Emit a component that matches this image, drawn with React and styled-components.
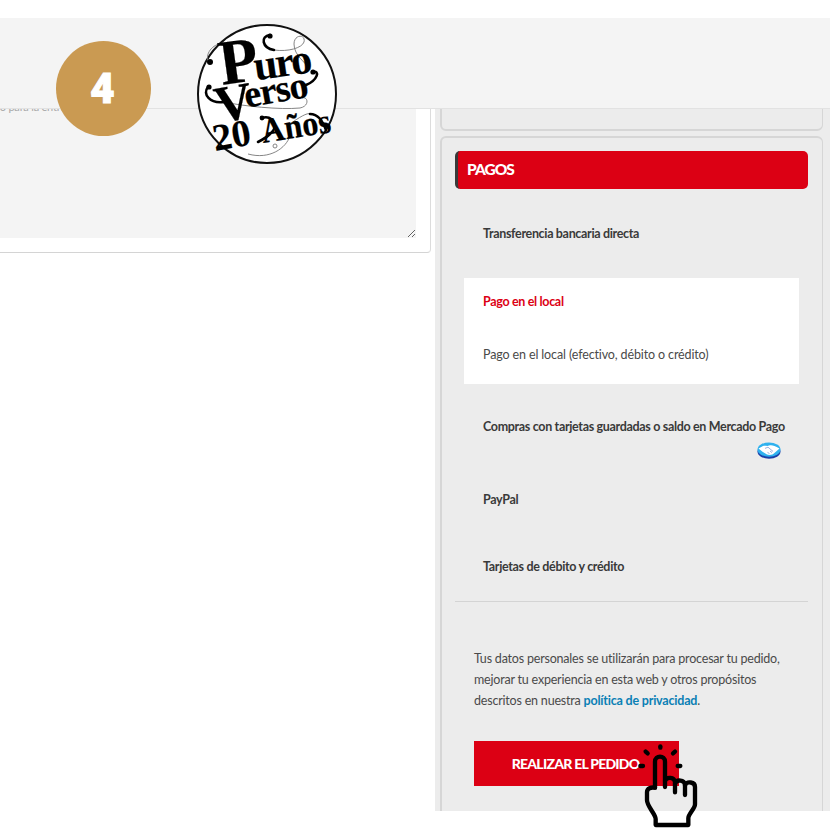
import React from 'react';
import styled, { createGlobalStyle } from 'styled-components';

const GlobalStyle = createGlobalStyle`
    html, body {
        margin: 0;
        padding: 0;
        background: #fff;
    }
    * {
        box-sizing: border-box;
    }
`

const Page = styled.div`
    position: relative;
    width: 830px;
    height: 830px;
    overflow: hidden;
    background: #fff;
    font-family: "Lato", "Liberation Sans", sans-serif;
    color: #3d3d3d;
`

const TopBar = styled.div`
    position: absolute;
    top: 0;
    left: 0;
    right: 0;
    z-index: 5;
    padding-top: 18px;
    background: #fff;
`

const HeaderBand = styled.header`
    display: flex;
    align-items: flex-start;
    gap: 46px;
    height: 91px;
    padding: 23px 0 0 56px;
    background: #f4f4f4;
    border-bottom: 1px solid #e2e2e2;
`

const StepCircle = styled.div`
    display: flex;
    align-items: center;
    justify-content: center;
    flex: none;
    width: 95px;
    height: 95px;
    border-radius: 50%;
    background: #ca9a52;
    color: #fff;
    font-family: "Roboto", sans-serif;
    font-weight: 900;
    font-size: 42px;
    padding-right: 2px;
    -webkit-text-stroke: 1px #fff;
`

const LogoMark = styled.svg`
    flex: none;
    width: 155px;
    height: 155px;
    margin: -23px 0 0 -7px;
`

const Columns = styled.main`
    display: grid;
    grid-template-columns: 431px 395px;
    column-gap: 4px;
    height: 811px;
    width: 830px;
`

const LeftColumn = styled.section`
    padding-top: 60px;
    overflow: hidden;
`

const NotesCard = styled.div`
    height: 193px;
    padding: 34px 14px 14px 0;
    background: #fff;
    border-right: 1px solid #dcdcdc;
    border-bottom: 1px solid #d4d4d4;
    border-bottom-right-radius: 4px;
`

const NotesArea = styled.textarea`
    display: block;
    width: calc(100% + 105px);
    height: 144px;
    margin-left: -105px;
    padding: 5px 8px;
    border: 0;
    border-radius: 0;
    outline: 0;
    background: #f4f4f4;
    font-family: "Lato", sans-serif;
    font-size: 11px;
    line-height: 16px;
    letter-spacing: -0.2px;

    &::placeholder {
        color: #a8a8a8;
        opacity: 1;
    }
`

const Sidebar = styled.aside`
    display: flex;
    flex-direction: column;
    gap: 6px;
    height: 811px;
    padding: 0 7px 0 5px;
    background: #ececec;
    overflow: hidden;
`

const Panel = styled.div`
    flex: none;
    border: 1px solid #d6d6d6;
    border-width: 2px 1px 2px 2px;
    border-radius: 6px;
`

const EmptyPanel = styled(Panel)`
    height: 131px;
`

const PaymentPanel = styled(Panel)`
    margin-top: -1px;
    padding: 13px 14px 60px 13px;
`

const SectionTitle = styled.h3`
    margin: 0;
    height: 38px;
    padding-left: 9px;
    background: #dc0014;
    border-left: 3px solid #3a3a3a;
    border-radius: 5px;
    color: #fff;
    font-size: 15.5px;
    font-weight: 900;
    line-height: 36px;
    letter-spacing: -1px;
`

const MethodList = styled.div`
    display: flex;
    flex-direction: column;
    padding: 0 9px;
`

const Method = styled.div`
    padding: ${props => props.$active ? '16px 19px 18px' : '0 19px'};
    background: ${props => props.$active ? '#fff' : 'transparent'};
    height: ${props => props.$height}px;
    margin-top: ${props => props.$top || 0}px;
`

const MethodName = styled.div`
    margin-top: ${props => props.$offset || 0}px;
    font-size: 12.5px;
    font-weight: 700;
    line-height: 16px;
    letter-spacing: -0.33px;
    white-space: nowrap;
    color: ${props => props.$active ? '#dc0014' : '#3a3a3a'};
`

const MethodNote = styled.p`
    margin: 37px 0 0;
    font-size: 12.5px;
    line-height: 16px;
    letter-spacing: -0.13px;
    color: #4a4a4a;
`

const MethodIcon = styled.div`
    display: flex;
    justify-content: flex-end;
    margin-right: -1px;
    margin-top: 7px;
`

const Divider = styled.hr`
    margin: 26px 0 0;
    border: 0;
    border-top: 1px solid #d4d4d4;
`

const Privacy = styled.p`
    margin: 46px 14px 0 19px;
    font-size: 12.5px;
    line-height: 21px;
    letter-spacing: -0.2px;
    color: #4a4a4a;

    a {
        color: #0a80b5;
        font-weight: 700;
        text-decoration: none;
    }
`

const OrderButton = styled.button`
    display: block;
    width: 205px;
    height: 45px;
    margin: 30px 0 0 19px;
    padding: 0 2px 0 0;
    border: 0;
    background: #dc0014;
    color: #fff;
    font-family: "Lato", sans-serif;
    font-size: 14px;
    font-weight: 900;
    letter-spacing: -0.75px;
`

const PointerHand = styled.svg`
    position: absolute;
    left: 625px;
    top: 735px;
    width: 90px;
    height: 95px;
    z-index: 6;
`

const Logo = () => (
    <LogoMark viewBox="0 0 155 155">
        <circle cx="77" cy="76" r="69" fill="#fff" stroke="#111" strokeWidth="2" />
        <g fill="none" stroke="#777" strokeWidth="0.9">
            <path d="M35 25 C24 25 15 34 18 44" />
            <path d="M84 32 C98 34 112 30 114 24 C116 16 104 16 104 26 C104 38 116 44 118 50" />
            <path d="M34 84 C52 88 90 92 110 90 C120 88 118 78 112 80" />
            <path d="M100 106 C108 100 118 94 120 96" />
            <path d="M58 136 C80 142 96 130 100 118" />
            <circle cx="85" cy="128" r="2" />
        </g>
        <g fill="none" stroke="#000" strokeWidth="2.6" strokeLinecap="round">
            <path d="M80 17 C70 18 72 30 84 32" />
            <path d="M123 54 C130 52 128 62 116 67" />
            <path d="M18 69 C12 76 20 86 34 84" />
            <path d="M72 100 C82 96 90 108 80 116 C76 120 72 122 68 124" />
            <path d="M120 96 C128 96 132 102 136 112" />
        </g>
        <g fill="#000">
            <circle cx="20" cy="44" r="3" />
            <circle cx="80" cy="18" r="2.6" />
            <circle cx="123" cy="54" r="2.6" />
            <circle cx="19" cy="69" r="2.6" />
            <circle cx="72" cy="100" r="2.4" />
        </g>
        <g fill="#000" stroke="#000" strokeWidth="0.2" fontFamily="'Liberation Serif', serif" fontWeight="700">
            <text x="32" y="67" transform="rotate(-8 32 67)">
                <tspan fontSize="64" letterSpacing="-1">P</tspan><tspan fontSize="42" dx="-4" letterSpacing="-2">uro</tspan>
            </text>
            <text x="28" y="105" transform="rotate(-10 28 105)" letterSpacing="-1">
                <tspan fontSize="52">V</tspan><tspan fontSize="38" dx="-6" dy="-10">erso</tspan>
            </text>
            <text x="25" y="133" fontSize="38" transform="rotate(-10 25 133)">20</text>
            <text x="73" y="125" fontSize="35" transform="rotate(-9 73 125)" textLength="70" lengthAdjust="spacingAndGlyphs">Años</text>
        </g>
    </LogoMark>
)

const HandshakeIcon = () => (
    <svg width="24" height="17" viewBox="0 0 24 17">
        <ellipse cx="12" cy="9.6" rx="11.5" ry="7.2" fill="#1b3fa8" />
        <ellipse cx="12" cy="7.6" rx="11.5" ry="7.2" fill="#2fb1ee" />
        <path d="M1.5 6.5 L6 4 C8 3.2 10 4.4 12 3.6 C14.5 2.8 17 3.4 22.5 6.5 L18 10.5 C16 13 12.5 13.4 10 12.6 L5.5 9.8 Z" fill="#fff" />
        <path d="M8 6.4 L11 5.2 L16 9.4 M10.5 10.4 L12.5 11.6 M13 9 L15 10.6" stroke="#7f9bd4" strokeWidth="0.8" fill="none" />
    </svg>
)

const Hand = () => (
    <PointerHand viewBox="0 0 270 285">
        <g fill="none" stroke="#000" strokeWidth="13" strokeLinecap="round" strokeLinejoin="round">
            <path d="M90 158 L90 80 C90 60 120 60 120 80 L120 156" />
            <path d="M120 138 C124 124 150 126 150 142 L150 172" />
            <path d="M150 146 C154 132 180 134 180 150 L180 180" />
            <path d="M180 150 C186 138 210 140 210 156 L210 208 C210 222 190 236 190 250 L190 270 L92 270 L92 252 C92 238 66 214 66 196 L66 172 C66 160 78 156 90 158" />
            <path d="M106 34 L106 38" />
            <path d="M62 50 L68 55" />
            <path d="M150 50 L144 55" />
            <path d="M46 93 L54 93" />
            <path d="M158 93 L166 93" />
        </g>
    </PointerHand>
)

const App = () => {
    return (
        <Page>
            <GlobalStyle />
            <TopBar>
                <HeaderBand>
                    <StepCircle>4</StepCircle>
                    <Logo />
                </HeaderBand>
            </TopBar>
            <Columns>
                <LeftColumn>
                    <NotesCard>
                        <NotesArea placeholder="Notas sobre tu pedido para la entrega." />
                    </NotesCard>
                </LeftColumn>
                <Sidebar>
                    <EmptyPanel />
                    <PaymentPanel>
                        <SectionTitle>PAGOS</SectionTitle>
                        <MethodList>
                            <Method $height={89}>
                                <MethodName $offset={37}>Transferencia bancaria directa</MethodName>
                            </Method>
                            <Method $active $height={106}>
                                <MethodName $active>Pago en el local</MethodName>
                                <MethodNote>Pago en el local (efectivo, débito o crédito)</MethodNote>
                            </Method>
                            <Method $height={73} $top={35}>
                                <MethodName>Compras con tarjetas guardadas o saldo en Mercado Pago</MethodName>
                                <MethodIcon><HandshakeIcon /></MethodIcon>
                            </Method>
                            <Method $height={67}>
                                <MethodName>PayPal</MethodName>
                            </Method>
                            <Method $height={16}>
                                <MethodName>Tarjetas de débito y crédito</MethodName>
                            </Method>
                        </MethodList>
                        <Divider />
                        <Privacy>
                            Tus datos personales se utilizarán para procesar tu pedido, mejorar tu experiencia en esta web y otros propósitos descritos en nuestra <a href="#privacidad">política de privacidad</a>.
                        </Privacy>
                        <OrderButton type="button">REALIZAR EL PEDIDO</OrderButton>
                    </PaymentPanel>
                </Sidebar>
            </Columns>
            <Hand />
        </Page>
    )
}

export default App;
